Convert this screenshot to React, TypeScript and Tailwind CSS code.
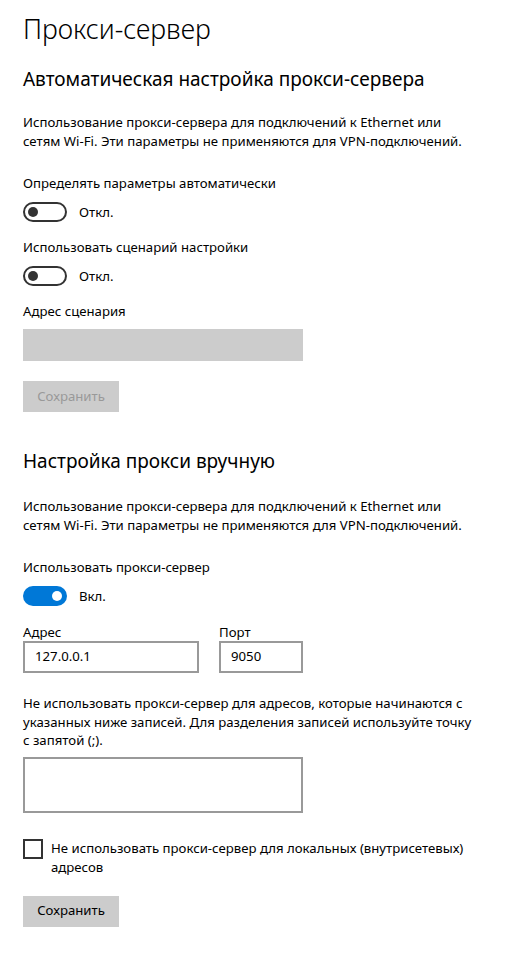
import React from "react";

const font = { fontFamily: '"Noto Sans", "Open Sans", sans-serif' };

function Toggle({ on, label, className = "" }: { on: boolean; label: string; className?: string }) {
  return (
    <div className={`flex items-center h-[20px] ${className}`}>
      {on ? (
        <div className="w-[44px] h-[20px] rounded-full bg-[#0078d7] flex items-center justify-end pr-[5px]">
          <div className="w-[10px] h-[10px] rounded-full bg-white" />
        </div>
      ) : (
        <div className="w-[44px] h-[20px] rounded-full border-2 border-[#333333] flex items-center pl-[3px] box-border">
          <div className="w-[10px] h-[10px] rounded-full bg-[#333333]" />
        </div>
      )}
      <span className="ml-[12px] text-[13.2px] leading-[19px] text-black">{label}</span>
    </div>
  );
}

export default function App() {
  return (
    <div className="w-[517px] h-[971px] bg-white pl-[23px] text-black overflow-hidden" style={font}>
      <div className="pt-[11px] text-[26.6px] leading-[36px] font-light">Прокси-сервер</div>
      <div className="mt-[18px] text-[19px] leading-[28px]">Автоматическая настройка прокси-сервера</div>
      <p className="mt-[20px] text-[13.2px] leading-[18.5px] w-[455px]">
        Использование прокси-сервера для подключений к Ethernet или сетям Wi-Fi. Эти параметры не применяются для VPN-подключений.
      </p>
      <div className="mt-[24px] text-[13.2px] leading-[19px]">Определять параметры автоматически</div>
      <Toggle on={false} label="Откл." className="mt-[9px]" />
      <div className="mt-[16px] text-[13.2px] leading-[19px]">Использовать сценарий настройки</div>
      <Toggle on={false} label="Откл." className="mt-[9px]" />
      <div className="mt-[16px] text-[13.2px] leading-[19px]">Адрес сценария</div>
      <div className="mt-[8px] w-[280px] h-[32px] bg-[#cccccc]" />
      <div className="mt-[20px] w-[96px] h-[31px] bg-[#cccccc] flex items-center justify-center text-[13.2px] text-[#999999]">
        Сохранить
      </div>

      <div className="mt-[35px] text-[19px] leading-[28px]">Настройка прокси вручную</div>
      <p className="mt-[22px] text-[13.2px] leading-[18.5px] w-[455px]">
        Использование прокси-сервера для подключений к Ethernet или сетям Wi-Fi. Эти параметры не применяются для VPN-подключений.
      </p>
      <div className="mt-[24px] text-[13.2px] leading-[19px]">Использовать прокси-сервер</div>
      <Toggle on={true} label="Вкл." className="mt-[9px]" />
      <div className="mt-[18px] flex gap-[20px]">
        <div className="flex flex-col">
          <div className="text-[13.2px] leading-[17px]">Адрес</div>
          <div className="w-[176px] h-[32px] border-2 border-[#999999] flex items-center pl-[10px] text-[13.2px]">127.0.0.1</div>
        </div>
        <div className="flex flex-col">
          <div className="text-[13.2px] leading-[17px]">Порт</div>
          <div className="w-[84px] h-[32px] border-2 border-[#999999] flex items-center pl-[10px] text-[13.2px]">9050</div>
        </div>
      </div>
      <p className="mt-[21px] text-[13.2px] leading-[18.5px] w-[455px]">
        Не использовать прокси-сервер для адресов, которые начинаются с указанных ниже записей. Для разделения записей используйте точку с запятой (;).
      </p>
      <div className="mt-[7px] w-[280px] h-[56px] border-2 border-[#999999]" />
      <div className="mt-[26px] flex items-start">
        <div className="w-[20px] h-[20px] border-2 border-[#333333] shrink-0" />
        <div className="ml-[8px] text-[13.2px] leading-[19px] w-[430px]">
          Не использовать прокси-сервер для локальных (внутрисетевых) адресов
        </div>
      </div>
      <div className="mt-[19px] w-[96px] h-[31px] bg-[#cccccc] flex items-center justify-center text-[13.2px] text-black">
        Сохранить
      </div>
    </div>
  );
}
